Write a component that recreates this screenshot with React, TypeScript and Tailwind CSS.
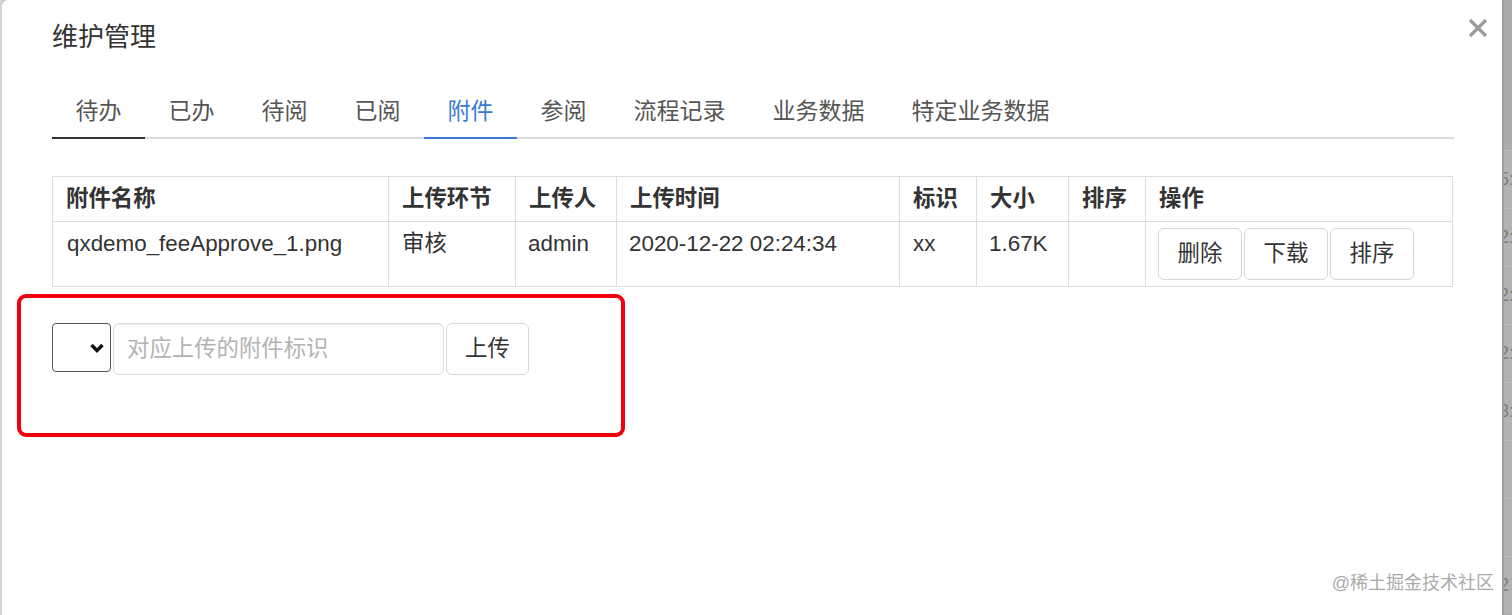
import { useState } from 'react';

const tabs = ['待办', '已办', '待阅', '已阅', '附件', '参阅', '流程记录', '业务数据', '特定业务数据'];

const columns = [
    { title: '附件名称', width: 'w-[336px]' },
    { title: '上传环节', width: 'w-[127px]' },
    { title: '上传人', width: 'w-[101px]' },
    { title: '上传时间', width: 'w-[283px]' },
    { title: '标识', width: 'w-[77px]' },
    { title: '大小', width: 'w-[92px]' },
    { title: '排序', width: 'w-[77px]' },
    { title: '操作', width: 'w-[307px]' },
];

const rows = [
    {
        name: 'qxdemo_feeApprove_1.png',
        step: '审核',
        user: 'admin',
        time: '2020-12-22 02:24:34',
        tag: 'xx',
        size: '1.67K',
        order: '',
    },
];

// fragments of the page table that peeks out behind the modal
const backdropRows = ['5:', '2:', '2:', '2:', '3:', ':', ':', '2'];

function CloseIcon() {
    return (
        <svg width="20" height="20" viewBox="0 0 20 20" fill="none">
            <path d="M2 2 L18 18 M18 2 L2 18" stroke="#9a9a9a" strokeWidth="3.2" strokeLinecap="butt" />
        </svg>
    );
}

function Chevron() {
    return (
        <svg width="14" height="10" viewBox="0 0 14 10" fill="none">
            <path d="M1.5 2 L7 7.5 L12.5 2" stroke="#111" strokeWidth="3.4" strokeLinejoin="miter" />
        </svg>
    );
}

function ActionButton({ label }: { label: string }) {
    return (
        <button className="h-[52px] w-[84px] rounded-[6px] border border-[#d6d6d6] bg-white text-[22.4px] leading-[32px] text-[#333]">
            {label}
        </button>
    );
}

export default function App() {
    const [activeTab] = useState('附件');
    const [flag, setFlag] = useState('');

    return (
        <div className="flex h-[615px] w-[1512px] overflow-hidden bg-[#c9c9c9] font-['Liberation_Sans','Noto_Sans_CJK_SC',sans-serif]">
            <div className="w-[2px] shrink-0 bg-[#d4d4d4]" />

            {/* Modal */}
            <div className="relative flex h-full w-[1500px] shrink-0 flex-col rounded-tl-[6px] bg-white pl-[50px] pr-[48px]">
                <button className="absolute right-[14px] top-[18px]">
                    <CloseIcon />
                </button>

                <h4 className="mt-[19px] h-[36px] text-[26px] leading-[36px] text-[#333]">维护管理</h4>

                {/* Tabs */}
                <ul className="mt-[27px] flex border-b-2 border-[#dddddd]">
                    {tabs.map((tab, i) => {
                        const isActive = tab === activeTab;
                        const isFocused = i === 0;
                        return (
                            <li
                                key={tab}
                                className={
                                    isActive
                                        ? '-mb-[2px] border-b-2 border-[#3a7bd5] px-[23.5px] pb-[10px] pt-[13px] text-[23px] leading-[32px] text-[#3a7bd5]'
                                        : isFocused
                                        ? '-mb-[2px] border-b-2 border-[#333] px-[23.5px] pb-[10px] pt-[13px] text-[23px] leading-[32px] text-[#555]'
                                        : '-mb-[2px] border-b-2 border-transparent px-[23.5px] pb-[10px] pt-[13px] text-[23px] leading-[32px] text-[#555]'
                                }
                            >
                                {tab}
                            </li>
                        );
                    })}
                </ul>

                {/* Attachment table */}
                <table className="mt-[37px] w-[1400px] table-fixed border-collapse text-[22.4px] leading-[32px] text-[#333]">
                    <thead>
                        <tr className="h-[45px]">
                            {columns.map((col) => (
                                <th key={col.title} className={`${col.width} border border-[#dddddd] px-[13px] py-[5px] text-left font-bold`}>
                                    {col.title}
                                </th>
                            ))}
                        </tr>
                    </thead>
                    <tbody>
                        {rows.map((row) => (
                            <tr key={row.name} className="h-[65px] align-top">
                                <td className="border border-[#dddddd] px-[14px] py-[6px]">{row.name}</td>
                                <td className="border border-[#dddddd] px-[13px] py-[6px]">{row.step}</td>
                                <td className="border border-[#dddddd] px-[12px] py-[6px]">{row.user}</td>
                                <td className="border border-[#dddddd] px-[12px] py-[6px]">{row.time}</td>
                                <td className="border border-[#dddddd] px-[13px] py-[6px]">{row.tag}</td>
                                <td className="border border-[#dddddd] px-[12px] py-[6px]">{row.size}</td>
                                <td className="border border-[#dddddd] px-[12px] py-[6px]">{row.order}</td>
                                <td className="border border-[#dddddd] px-[12px] py-[6px]">
                                    <div className="flex gap-[2px]">
                                        <ActionButton label="删除" />
                                        <ActionButton label="下载" />
                                        <ActionButton label="排序" />
                                    </div>
                                </td>
                            </tr>
                        ))}
                    </tbody>
                </table>

                {/* Upload form */}
                <div className="mt-[36px] flex items-start gap-[2px]">
                    <div className="flex h-[49px] w-[59px] items-center justify-end rounded-[4px] border border-[#555] bg-white pr-[6px]">
                        <Chevron />
                    </div>
                    <input
                        value={flag}
                        onChange={(e) => setFlag(e.target.value)}
                        placeholder="对应上传的附件标识"
                        className="h-[52px] w-[331px] rounded-[6px] border border-[#dcdcdc] px-[13px] text-[22.4px] text-[#333] shadow-[inset_0_1px_1px_rgba(0,0,0,0.06)] outline-none placeholder:text-[#b3b3b3]"
                    />
                    <button className="h-[52px] w-[83px] rounded-[6px] border border-[#d6d6d6] bg-white text-[22.4px] text-[#333]">
                        上传
                    </button>
                </div>

                {/* Red annotation box */}
                <div className="pointer-events-none absolute left-[15px] top-[294px] h-[143px] w-[608px] rounded-[9px] border-4 border-[#f2000d]" />

                {/* Watermark */}
                <span className="absolute bottom-[22px] right-[8px] text-[18px] leading-[20px] text-[#ababab]">@稀土掘金技术社区</span>
            </div>

            {/* Backdrop peeking on the right */}
            <div className="flex w-[10px] shrink-0 flex-col overflow-hidden border-l-2 border-[#9e9e9e] bg-[#ababab]">
                <div className="h-[150px] shrink-0" />
                {backdropRows.map((frag, i) => (
                    <div key={i} className="flex h-[58px] shrink-0 items-center border-t border-[#bcbcbc] bg-[#b2b2b2]">
                        <span aria-hidden="true" className="-ml-[5px] text-[18px] text-[#7d7d7d]">{frag}</span>
                    </div>
                ))}
            </div>
        </div>
    );
}
